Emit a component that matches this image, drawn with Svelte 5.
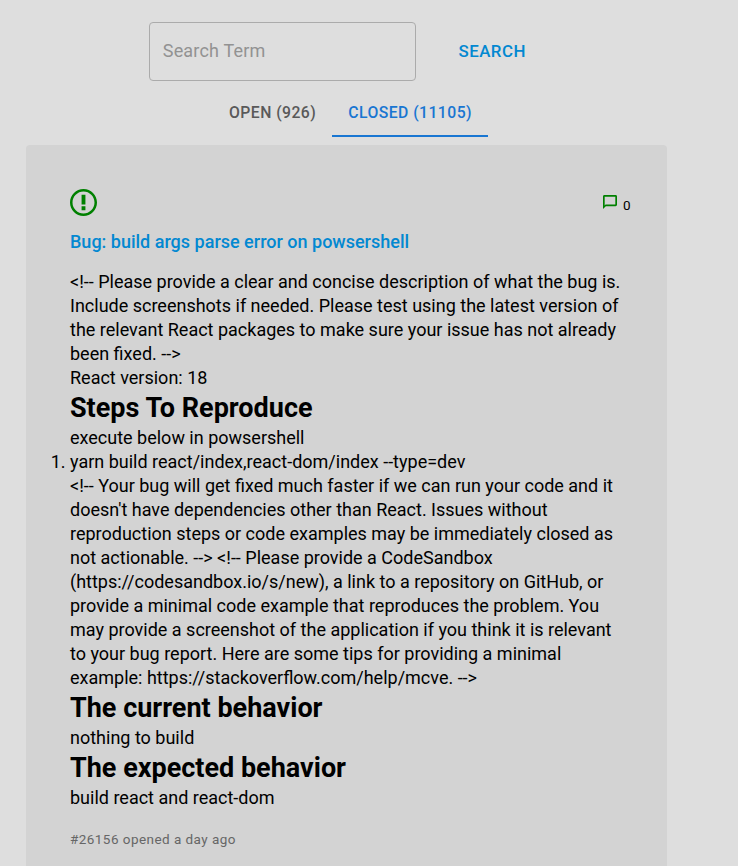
<script>
  let term = $state('');
  const tabs = [
    { label: 'Open (926)', active: false },
    { label: 'Closed (11105)', active: true }
  ];
</script>

<main>
  <form class="search" onsubmit={(e) => e.preventDefault()}>
    <input type="text" placeholder="Search Term" bind:value={term} />
    <button type="submit">Search</button>
  </form>

  <nav>
    {#each tabs as tab}
      <button class="tab" class:active={tab.active}>{tab.label}</button>
    {/each}
  </nav>

  <article>
    <header>
      <svg class="issue" viewBox="0 0 14 14" aria-hidden="true">
        <path fill-rule="evenodd" d="M7 1.3c3.14 0 5.7 2.56 5.7 5.7s-2.56 5.7-5.7 5.7A5.71 5.71 0 0 1 1.3 7c0-3.14 2.56-5.7 5.7-5.7zM7 0C3.14 0 0 3.14 0 7s3.14 7 7 7 7-3.14 7-7-3.14-7-7-7zm1 3H6v5h2V3zm0 6H6v2h2V9z" />
      </svg>
      <div class="comments">
        <svg viewBox="2 2 20 20" aria-hidden="true">
          <path d="M20 2H4c-1.1 0-2 .9-2 2v18l4-4h14c1.1 0 2-.9 2-2V4c0-1.1-.9-2-2-2zm-.4 13.7H5.6l-1.2 1.2V4.4h15.2v11.3z" />
        </svg>
        <span>0</span>
      </div>
    </header>
    <h2>Bug: build args parse error on powsershell</h2>
    <section>
      <p>&lt;!-- Please provide a clear and concise description of what the bug is. Include screenshots if needed. Please test using the latest version of the relevant React packages to make sure your issue has not already been fixed. --&gt;</p>
      <p>React version: 18</p>
      <h3>Steps To Reproduce</h3>
      <p>execute below in powsershell</p>
      <ol><li>yarn build react/index,react-dom/index --type=dev</li></ol>
      <p>&lt;!-- Your bug will get fixed much faster if we can run your code and it doesn't have dependencies other than React. Issues without reproduction steps or code examples may be immediately closed as not actionable. --&gt; &lt;!-- Please provide a CodeSandbox (https://codesandbox.io/s/new), a link to a repository on GitHub, or provide a minimal code example that reproduces the problem. You may provide a screenshot of the application if you think it is relevant to your bug report. Here are some tips for providing a minimal example: https://stackoverflow.com/help/mcve. --&gt;</p>
      <h3>The current behavior</h3>
      <p>nothing to build</p>
      <h3>The expected behavior</h3>
      <p>build react and react-dom</p>
    </section>
    <footer>#26156 opened a day ago</footer>
  </article>
</main>

<style>
  :global(body) {
    margin: 0;
    background: #dedede;
    overflow: hidden;
  }
  main {
    box-sizing: border-box;
    height: 866px;
    overflow: hidden;
    padding: 22px 71px 0 26px;
    font-family: Roboto, sans-serif;
    font-size: 18px;
    line-height: 24px;
    color: #000;
  }
  h2, h3, p, ol { margin: 0; padding: 0; }
  button, input { font-family: inherit; background: none; }
  .search {
    display: flex;
    align-items: center;
    margin-left: 123px;
  }
  input {
    box-sizing: border-box;
    width: 267px;
    height: 59px;
    padding: 0 12.8px 2px;
    border: 1px solid #ababab;
    border-radius: 4px;
    font-size: 18px;
    letter-spacing: 0.00938em;
    outline: none;
  }
  input::placeholder { color: #929292; opacity: 1; }
  button {
    border: 0;
    padding: 0;
    font-size: 15.75px;
    line-height: 20px;
    font-weight: 500;
    text-transform: uppercase;
    letter-spacing: 0.02857em;
    cursor: pointer;
  }
  .search button {
    margin-left: 42.5px;
    padding-bottom: 2px;
    font-size: 16.875px;
    color: #0288d1;
  }
  nav {
    display: flex;
    margin: 8px 0 8px 187px;
  }
  .tab {
    box-sizing: border-box;
    height: 48px;
    padding: 2px 16px 0;
    border-bottom: 2px solid transparent;
    color: #595959;
    white-space: nowrap;
  }
  .active {
    color: #1976d2;
    border-color: #1976d2;
  }
  article {
    box-sizing: border-box;
    height: 760px;
    padding: 44px 36px 0 44px;
    background: #d3d3d3;
    border-radius: 4px;
  }
  header {
    display: flex;
    justify-content: space-between;
    height: 27px;
  }
  svg { fill: #008000; flex: none; }
  .issue { width: 27px; height: 27px; }
  .comments {
    display: flex;
    font-size: 13.5px;
  }
  .comments svg {
    width: 14px;
    height: 14px;
    margin: 6px 5.8px 0 0;
  }
  .comments span { margin: 4px 0.5px 0 0; }
  h2 {
    margin: 14px 0 16px;
    font-size: 18px;
    font-weight: 500;
    color: #0288d1;
  }
  h3 {
    font-size: 27px;
    line-height: 36px;
    font-weight: 700;
  }
  footer {
    margin-top: 17px;
    font-size: 13.5px;
    letter-spacing: 0.03333em;
    color: #666;
  }
</style>
